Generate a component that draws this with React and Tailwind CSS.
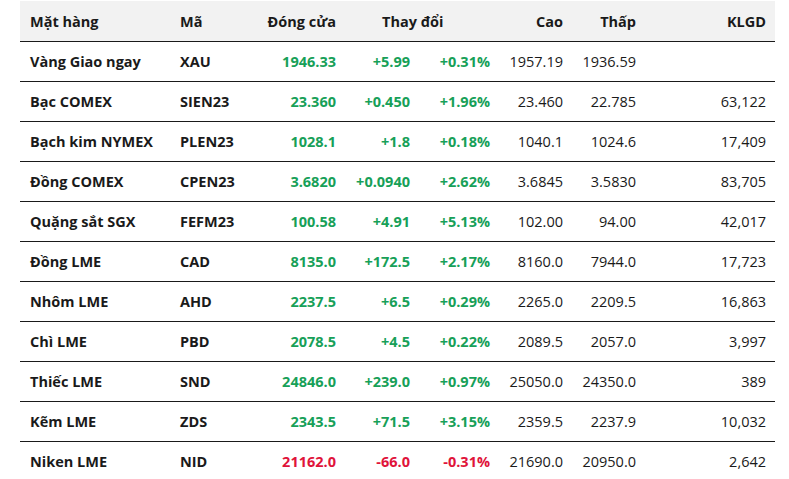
const rows = [
  ["Vàng Giao ngay", "XAU", "1946.33", "+5.99", "+0.31%", "1957.19", "1936.59", ""],
  ["Bạc COMEX", "SIEN23", "23.360", "+0.450", "+1.96%", "23.460", "22.785", "63,122"],
  ["Bạch kim NYMEX", "PLEN23", "1028.1", "+1.8", "+0.18%", "1040.1", "1024.6", "17,409"],
  ["Đồng COMEX", "CPEN23", "3.6820", "+0.0940", "+2.62%", "3.6845", "3.5830", "83,705"],
  ["Quặng sắt SGX", "FEFM23", "100.58", "+4.91", "+5.13%", "102.00", "94.00", "42,017"],
  ["Đồng LME", "CAD", "8135.0", "+172.5", "+2.17%", "8160.0", "7944.0", "17,723"],
  ["Nhôm LME", "AHD", "2237.5", "+6.5", "+0.29%", "2265.0", "2209.5", "16,863"],
  ["Chì LME", "PBD", "2078.5", "+4.5", "+0.22%", "2089.5", "2057.0", "3,997"],
  ["Thiếc LME", "SND", "24846.0", "+239.0", "+0.97%", "25050.0", "24350.0", "389"],
  ["Kẽm LME", "ZDS", "2343.5", "+71.5", "+3.15%", "2359.5", "2237.9", "10,032"],
  ["Niken LME", "NID", "21162.0", "-66.0", "-0.31%", "21690.0", "20950.0", "2,642"],
];

export default function App() {
  return (
    <div
      className="w-[789px] h-[479px] overflow-hidden bg-white pt-px pl-[20px] text-[14.5px] text-[#1a1a1a]"
      style={{ fontFamily: '"Open Sans", "Noto Sans", sans-serif' }}
    >
      <table className="w-[755px] table-fixed border-collapse [&_td]:pt-[2px] [&_th]:pt-[2px]">
        <colgroup>
          <col className="w-[150px]" />
          <col className="w-[90px]" />
          <col className="w-[86px]" />
          <col className="w-[74px]" />
          <col className="w-[80px]" />
          <col className="w-[73px]" />
          <col className="w-[73px]" />
          <col className="w-[129px]" />
        </colgroup>
        <thead>
          <tr className="h-[40px] bg-[#f2f2f2] border-b border-[#1a1a1a]">
            <th className="text-left pl-[10px] font-bold">Mặt hàng</th>
            <th className="text-left pl-[10px] font-bold">Mã</th>
            <th className="text-right pr-[10px] font-bold">Đóng cửa</th>
            <th colSpan={2} className="text-left pl-[36px] font-bold">Thay đổi</th>
            <th className="text-right pr-[10px] font-bold">Cao</th>
            <th className="text-right pr-[10px] font-bold">Thấp</th>
            <th className="text-right pr-[9px] font-bold">KLGD</th>
          </tr>
        </thead>
        <tbody>
          {rows.map((r, i) => {
            const down = r[3].startsWith("-");
            const tone = down ? "text-[#e0133a]" : "text-[#17a058]";
            return (
              <tr key={i} className="h-[40px] border-b border-[#1a1a1a]">
                <td className="pl-[10px] font-bold whitespace-nowrap">{r[0]}</td>
                <td className="pl-[10px] font-bold">{r[1]}</td>
                <td className={`text-right pr-[10px] font-bold ${tone}`}>{r[2]}</td>
                <td className={`text-right pr-[10px] font-bold ${tone}`}>{r[3]}</td>
                <td className={`text-right pr-[10px] font-bold ${tone}`}>{r[4]}</td>
                <td className="text-right pr-[10px]">{r[5]}</td>
                <td className="text-right pr-[10px]">{r[6]}</td>
                <td className="text-right pr-[9px]">{r[7]}</td>
              </tr>
            );
          })}
        </tbody>
      </table>
    </div>
  );
}
